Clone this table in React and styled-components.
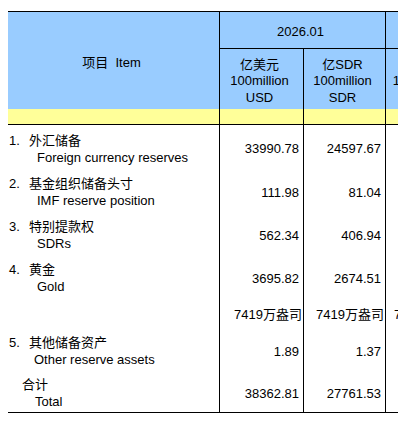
import React from "react";
import styled, { createGlobalStyle } from "styled-components";

const GlobalStyle = createGlobalStyle`
  body {
    margin: 8px;
    background: #fff;
    font-family: "Liberation Sans", "Noto Sans CJK SC", sans-serif;
    font-size: 13px;
    color: #000;
  }
`;

const Viewport = styled.div`
  width: 390px;
  margin-top: 3px;
  overflow: hidden;
`;

const Sheet = styled.div`
  display: grid;
  grid-template-columns: 212px 84px 82px 77px 84px;
  grid-template-rows: 37px 60px 16px 44px 43px 43px 43px 30px 43px 41px;
  width: max-content;
  border-top: 1px solid #000;
  border-bottom: 1px solid #000;
`;

const Cell = styled.div`
  box-sizing: border-box;
  display: flex;
  flex-direction: column;
  justify-content: center;
  align-items: ${props =>
    props.$align === "right" ? "flex-end" : props.$align === "left" ? "flex-start" : "center"};
  grid-row: ${props => (props.$rows ? `span ${props.$rows}` : "auto")};
  grid-column: ${props => (props.$cols ? `span ${props.$cols}` : "auto")};
  padding: 3px ${props => props.$padRight ?? 4}px 0 ${props => props.$padLeft ?? 0}px;
  background: ${props => props.$bg || "transparent"};
  border-right: 1px solid #000;
  border-bottom: ${props => (props.$line ? "1px solid #000" : "none")};
  line-height: 17px;
  white-space: nowrap;
`;

const SubHead = styled(Cell)`
  line-height: 16.5px;
  padding-top: 5px;
`;

const LabelLine = styled.div`
  display: flex;
  padding-left: ${props => props.$indent || 0}px;
`;

const Num = styled.span`
  display: inline-block;
  width: 20px;
`;

const BLUE = "#99ccff";
const YELLOW = "#ffff99";

const periods = [
  { date: "2026.01", cols: ["亿美元", "亿SDR"], units: ["USD", "SDR"] },
  { date: "2025.12", cols: ["亿美元", "亿SDR"], units: ["USD", "SDR"] },
];

const rows = [
  { num: "1.", cn: "外汇储备", en: "Foreign currency reserves", indent: 28, values: ["33990.78", "24597.67", "33578.77", "24483.95"] },
  { num: "2.", cn: "基金组织储备头寸", en: "IMF reserve position", indent: 28, values: ["111.98", "81.04", "110.47", "80.55"] },
  { num: "3.", cn: "特别提款权", en: "SDRs", indent: 28, values: ["562.34", "406.94", "557.21", "406.29"] },
  { num: "4.", cn: "黄金", en: "Gold", indent: 28, values: ["3695.82", "2674.51", "3198.72", "2332.34"] },
  { oz: true, values: ["7419万盎司", "7419万盎司", "7415万盎司", "7415万盎司"] },
  { num: "5.", cn: "其他储备资产", en: "Other reserve assets", indent: 25, values: ["1.89", "1.37", "-1.22", "-0.89"] },
  { total: true, cn: "合计", en: "Total", indent: 26, values: ["38362.81", "27761.53", "37443.95", "27302.24"] },
];

const App = () => (
  <>
    <GlobalStyle />
    <Viewport>
      <Sheet>
        <Cell $rows={2} $bg={BLUE}>项目&nbsp; Item</Cell>
        {periods.map(p => (
          <Cell key={p.date} $cols={2} $bg={BLUE} $line>
            {p.date}
          </Cell>
        ))}
        {periods.map(p =>
          p.cols.map((c, i) => (
            <SubHead key={p.date + c} $bg={BLUE}>
              <span>{c}</span>
              <span>100million</span>
              <span>{p.units[i]}</span>
            </SubHead>
          ))
        )}
        {[0, 1, 2, 3, 4].map(i => (
          <Cell key={"y" + i} $bg={YELLOW} $line />
        ))}
        {rows.map((r, ri) => (
          <React.Fragment key={ri}>
            <Cell $align="left" $padLeft={1}>
              {r.oz ? null : r.total ? (
                <>
                  <LabelLine $indent={13}>{r.cn}</LabelLine>
                  <LabelLine $indent={r.indent}>{r.en}</LabelLine>
                </>
              ) : (
                <>
                  <LabelLine>
                    <Num>{r.num}</Num>
                    {r.cn}
                  </LabelLine>
                  <LabelLine $indent={r.indent}>{r.en}</LabelLine>
                </>
              )}
            </Cell>
            {r.values.map((v, vi) => (
              <Cell key={vi} $align="right" $padRight={r.oz ? (vi < 2 ? 1 : 0) : 4}>
                {v}
              </Cell>
            ))}
          </React.Fragment>
        ))}
      </Sheet>
    </Viewport>
  </>
);

export default App;
